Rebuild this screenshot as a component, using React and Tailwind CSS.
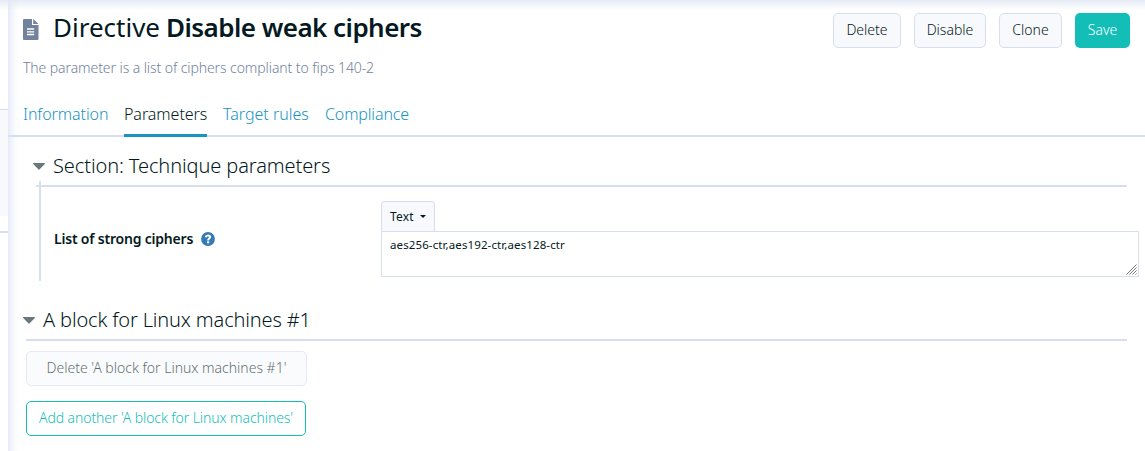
const light =
  "flex h-[35px] items-center justify-center rounded-[5px] border border-[#d8ddf0] bg-[#f8f9fc] pb-0.5 text-[14px] font-light";

function Caret({ className }) {
  return (
    <svg className={`h-[7px] w-3 shrink-0 ${className}`} viewBox="0 0 12 7">
      <path d="M.5 0h11a.5.5 0 0 1 .3.900L6.700 6.300a1 1 0 0 1-1.400 0L.2.900A.5.5 0 0 1 .5 0z" fill="#6a777b" />
    </svg>
  );
}

function FileIcon() {
  return (
    <svg className="mt-0.5 h-[21px] w-4 shrink-0" viewBox="0 0 16 21">
      <path d="M1 0h8v6h6.500V20a1 1 0 0 1-1 1H1a1 1 0 0 1-1-1V1a1 1 0 0 1 1-1zM10.200 0l5.300 5h-5.300z" fill="#72829d" />
      <path d="M4 10h7.200M4 12.800h7.200M4 15.500h7.200" stroke="#fff" strokeWidth="1.300" />
    </svg>
  );
}

function HelpIcon() {
  return (
    <svg className="h-[14px] w-[14px] shrink-0" viewBox="0 0 14 14">
      <circle cx="7" cy="7" r="6.900" fill="#337ab7" />
      <path d="M4.600 5.200C5 3.900 5.900 3.400 7 3.400c1.400 0 2.200.7 2.200 1.700C9.200 6.500 7.100 6.600 7.100 8.400" fill="none" stroke="#fff" strokeWidth="2" />
      <rect x="6" y="9.300" width="2.200" height="2" fill="#fff" />
    </svg>
  );
}

function Grip() {
  return (
    <svg className="h-[11px] w-[11px]" viewBox="0 0 11 11">
      <path d="M.5 10.500l10-10M3.500 10.500l7-7M6.500 10.500l4-4M9.500 10.500l1-1" stroke="#777" strokeWidth="1" />
    </svg>
  );
}

export default function App() {
  return (
    <div className="relative flex h-[451px] w-[1145px] overflow-hidden bg-white font-['Noto_Sans',sans-serif] whitespace-nowrap text-[#041922]">
      <aside className="flex w-2 shrink-0 flex-col">
        <div className="h-[109px]" />
        <div className="h-[107px] border-t border-[#d8ddf0] bg-[#f8f9fc]" />
        <div className="h-[15px]" />
        <div className="h-0.5 bg-[#d6deef]" />
      </aside>

      <main className="min-w-0 flex-1 bg-[linear-gradient(to_right,#e7ebf7,#f3f5fb_4px,#fbfcfe_8px,#fff_11px)]">
        <header className="flex h-[95px] justify-between pr-[15px] pl-[15px]">
          <div className="flex flex-col">
            <div className="flex h-14 items-center">
              <FileIcon />
              <h1 className="-mt-0.5 ml-[14px] flex text-[26px] leading-9">
                <span className="w-[113px]">Directive</span>
                <span className="font-semibold tracking-[-0.54px]">Disable weak ciphers</span>
              </h1>
            </div>
            <p className="mt-px text-[14px] leading-[22px] font-light tracking-[-0.086px] text-[#72829d]">
              The parameter is a list of ciphers compliant to fips 140-2
            </p>
          </div>
          <div className="flex gap-[13px] pt-[13px]">
            <button className={`${light} w-[68px]`}>Delete</button>
            <button className={`${light} w-[72px]`}>Disable</button>
            <button className={`${light} w-[63px]`}>Clone</button>
            <button className="flex h-[35px] w-[55px] items-center justify-center rounded-[5px] bg-[#13beb7] pb-0.5 text-[14px] font-light text-white">
              Save
            </button>
          </div>
        </header>

        <nav className="flex h-[42px] gap-4 border-b-2 border-[#d6deef] pl-[15px] text-[16px] leading-[38px] font-light text-[#1694c3]">
          <a className="w-[85px] tracking-[-0.08px]">Information</a>
          <a className="h-[42px] w-[83px] border-b-3 border-[#1694c3] tracking-[-0.05px] text-[#041922]">Parameters</a>
          <a className="w-[86px]">Target rules</a>
          <a className="tracking-[-0.13px]">Compliance</a>
        </nav>

        <section className="flex h-36 flex-col">
          <h2 className="ml-[25px] flex h-12 shrink-0 items-start text-[20px] leading-[30px] font-light tracking-[-0.1px]">
            <Caret className="mt-[26px]" />
            <span className="pt-[14px] pl-2">Section: Technique parameters</span>
          </h2>
          <div className="ml-7 h-0.5 w-[1091px] shrink-0 bg-[#d6deef]" />
          <div className="-mt-[6px] ml-[31px] flex h-[100px] shrink-0 border-l-2 border-[#d6deef] pl-[13px]">
            <div className="flex h-[115px] w-[327px] shrink-0 items-center text-[14px] font-semibold">
              <span className="-mt-px w-[147px] tracking-[-0.2px]">List of strong ciphers</span>
              <HelpIcon />
            </div>
            <div className="flex w-[758px] shrink-0 flex-col pt-5">
              <button className="flex h-[30px] w-[54px] items-center gap-[6px] rounded-t-[4px] border border-b-0 border-[#d6deef] bg-[#f8f9fc] pl-2 text-[12px] tracking-[0.2px]">
                Text
                <span className="border-x-[3px] border-t-[3px] border-x-transparent border-t-[#041922]" />
              </button>
              <div className="flex h-[46px] shrink-0 items-end justify-between border border-[#d6deef] pl-2">
                <span className="self-start pt-[5px] text-[11.5px] leading-4 tracking-[0.11px]">aes256-ctr,aes192-ctr,aes128-ctr</span>
                <span className="pr-px pb-px"><Grip /></span>
              </div>
            </div>
          </div>
        </section>

        <section className="mt-[17px] flex flex-col">
          <h2 className="ml-[15px] flex h-[41px] items-start text-[20px] leading-[30px] font-light tracking-[-0.15px]">
            <Caret className="mt-[19px]" />
            <span className="pt-[7px] pl-2">A block for Linux machines #1</span>
          </h2>
          <div className="ml-[18px] h-0.5 w-[1101px] bg-[#d6deef]" />
          <div className="mt-[10px] ml-[18px] flex flex-col gap-[15px]">
            <button className={`${light} w-[281px] opacity-65`}>Delete 'A block for Linux machines #1'</button>
            <button className="flex h-[35px] w-[280px] items-center justify-center rounded-[5px] border border-[#13beb7] pb-0.5 text-[14px] font-light tracking-[-0.085px] text-[#13beb7]">
              Add another 'A block for Linux machines'
            </button>
          </div>
        </section>
      </main>
      <div className="pointer-events-none absolute inset-x-0 top-0 h-[10px] bg-linear-to-b from-[#dfe6f2]/80 to-transparent" />
    </div>
  );
}
